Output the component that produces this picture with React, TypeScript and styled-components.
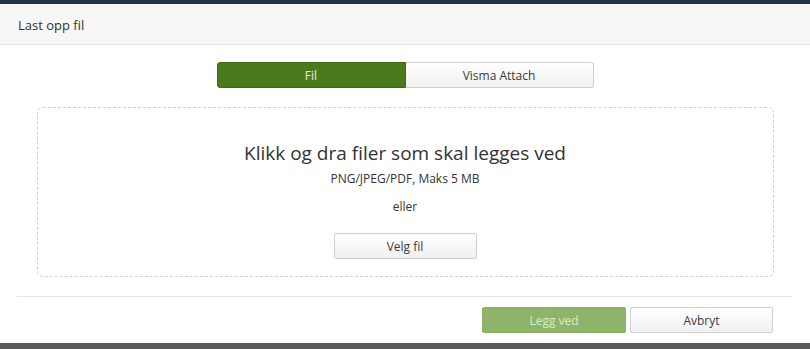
import React from "react";
import styled, { createGlobalStyle } from "styled-components";

const Global = createGlobalStyle`
  html, body { margin: 0; padding: 0; background: #ffffff; }
  body { font-family: "Open Sans", "Liberation Sans", sans-serif; color: #333; }
  * { box-sizing: border-box; }
`;

const Page = styled.div`
  width: 810px;
  height: 349px;
  display: flex;
  flex-direction: column;
  background: #fff;
  overflow: hidden;
`;

const TopStripe = styled.div`
  height: 4px;
  background: #243246;
  flex: none;
`;

const Header = styled.div`
  height: 41px;
  flex: none;
  background: #f7f7f7;
  border-bottom: 1px solid #e3e3e3;
  display: flex;
  align-items: center;
  padding: 1px 0 0 18px;
  font-size: 13px;
  color: #333;
`;

const Body = styled.div`
  flex: 1;
  display: flex;
  flex-direction: column;
  align-items: center;
  padding: 17px 37px 0;
`;

const Toggle = styled.div`
  display: flex;
  height: 26px;
`;

const ToggleButton = styled.button<{ $active?: boolean }>`
  width: ${(p) => (p.$active ? "189px" : "188px")};
  height: 26px;
  font-family: "Open Sans", "Liberation Sans", sans-serif;
  font-size: 12px;
  padding: 0;
  cursor: pointer;
  border: 1px solid ${(p) => (p.$active ? "#3e6a17" : "#cfcfcf")};
  background: ${(p) => (p.$active ? "#4b7a1d" : "linear-gradient(#ffffff, #f1f1f1)")};
  color: ${(p) => (p.$active ? "#e6f2da" : "#3a3a3a")};
  border-radius: ${(p) => (p.$active ? "3px 0 0 3px" : "0 3px 3px 0")};
  ${(p) => (p.$active ? "" : "border-left: none;")}
`;

const DropZone = styled.div`
  margin-top: 19px;
  width: 737px;
  height: 170px;
  border: 1px dashed #cfcfcf;
  border-radius: 6px;
  display: flex;
  flex-direction: column;
  align-items: center;
  padding-top: 32px;
`;

const DropTitle = styled.div`
  font-size: 19px;
  line-height: 26px;
  color: #333;
`;

const Hint = styled.div<{ $mt: number }>`
  font-size: 12px;
  line-height: 17px;
  margin-top: ${(p) => p.$mt}px;
  color: #333;
`;

const Button = styled.button<{ $primary?: boolean; $w?: number }>`
  width: ${(p) => p.$w ?? 143}px;
  height: 26px;
  padding: 0;
  font-family: "Open Sans", "Liberation Sans", sans-serif;
  font-size: 12px;
  border-radius: 2px;
  cursor: pointer;
  border: 1px solid ${(p) => (p.$primary ? "#8bb166" : "#cfcfcf")};
  background: ${(p) => (p.$primary ? "#8db468" : "linear-gradient(#ffffff, #f0f0f0)")};
  color: ${(p) => (p.$primary ? "#dcedcb" : "#3a3a3a")};
`;

const PickButton = styled(Button)`
  margin-top: 18px;
`;

const Separator = styled.div`
  margin: 19px 18px 0 17px;
  height: 1px;
  background: #e4e4e4;
  flex: none;
`;

const Footer = styled.div`
  display: flex;
  justify-content: flex-end;
  gap: 4px;
  padding: 10px 37px 0 0;
  height: 46px;
  flex: none;
`;

const BottomStripe = styled.div`
  height: 6px;
  flex: none;
  background: #5a5a5a;
`;

export default function App() {
  return (
    <>
      <Global />
      <Page>
        <TopStripe />
        <Header>Last opp fil</Header>
        <Body>
          <Toggle>
            <ToggleButton $active>Fil</ToggleButton>
            <ToggleButton>Visma Attach</ToggleButton>
          </Toggle>
          <DropZone>
            <DropTitle>Klikk og dra filer som skal legges ved</DropTitle>
            <Hint $mt={4}>PNG/JPEG/PDF, Maks 5 MB</Hint>
            <Hint $mt={11}>eller</Hint>
            <PickButton>Velg fil</PickButton>
          </DropZone>
        </Body>
        <Separator />
        <Footer>
          <Button $primary $w={144}>Legg ved</Button>
          <Button>Avbryt</Button>
        </Footer>
        <BottomStripe />
      </Page>
    </>
  );
}
